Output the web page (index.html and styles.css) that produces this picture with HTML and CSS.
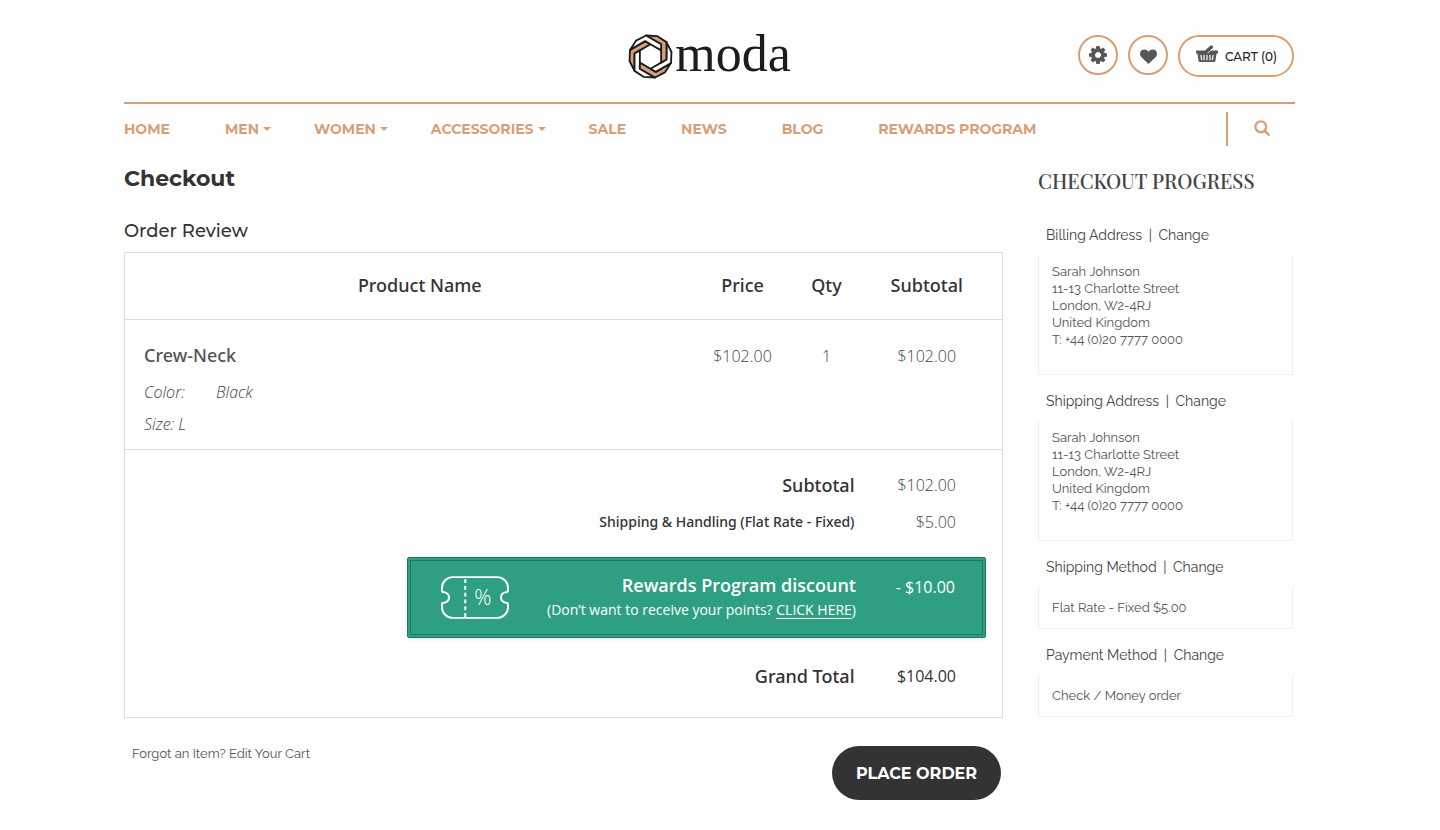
FILE: index.html
```html
<!DOCTYPE html>
<html lang="en">
<head>
<meta charset="utf-8">
<title>Checkout - moda</title>
<meta name="viewport" content="width=device-width, initial-scale=1">
<link rel="stylesheet" href="styles.css">
</head>
<body>
<div class="page">
  <header class="header">
    <a class="logo" href="#">
      <svg class="logo-mark" viewBox="0 0 44 44" aria-hidden="true">
        <defs><path id="blade" d="M22 10 27.2 7 42 15.5 42.5 26.4 37.6 36.1 37.6 19 32.4 16Z"/></defs>
        <g stroke="#1d1b1b" stroke-width="1.8" stroke-linejoin="round" transform="matrix(-1 0 0 1 44 0)">
          <use href="#blade" fill="#d6a077"/>
          <use href="#blade" fill="#fff" transform="rotate(60 22 22)"/>
          <use href="#blade" fill="#d6a077" transform="rotate(120 22 22)"/>
          <use href="#blade" fill="#fff" transform="rotate(180 22 22)"/>
          <use href="#blade" fill="#d6a077" transform="rotate(240 22 22)"/>
          <use href="#blade" fill="#fff" transform="rotate(300 22 22)"/>
        </g>
      </svg>
      <span class="logo-name">moda</span>
    </a>
    <div class="tools">
      <button class="round" type="button" aria-label="Settings">
        <svg width="18" height="18" viewBox="0 128 1536 1536" aria-hidden="true"><path fill="#555759" d="M1024 896q0-106-75-181t-181-75-181 75-75 181 75 181 181 75 181-75 75-181zm512-109v222q0 12-8 23t-20 13l-185 28q-19 54-39 91 35 50 107 138 10 12 10 25t-9 23q-27 37-99 108t-94 71q-12 0-26-9l-138-108q-44 23-91 38-16 136-29 186-7 28-36 28h-222q-14 0-24.5-8.5t-11.5-21.5l-28-184q-49-16-90-37l-141 107q-10 9-25 9-14 0-25-11-126-114-165-168-7-10-7-23 0-12 8-23 15-21 51-66.5t54-70.5q-27-50-41-99l-183-27q-13-2-21-12.5t-8-23.5v-222q0-12 8-23t19-13l186-28q14-46 39-92-40-57-107-138-10-12-10-24 0-10 9-23 26-36 98.500-107.500t94.500-71.500q13 0 26 10l138 107q44-23 91-38 16-136 29-186 7-28 36-28h222q14 0 24.500 8.500t11.500 21.500l28 184q49 16 90 37l142-107q9-9 24-9 13 0 25 10 129 119 165 170 7 8 7 22 0 12-8 23-15 21-51 66.500t-54 70.500q26 50 41 98l183 28q13 2 21 12.500t8 23.500z"/></svg>
      </button>
      <button class="round" type="button" aria-label="Wishlist">
        <svg class="heart" width="17" height="15" viewBox="0 0 18 16" aria-hidden="true"><path fill="#555759" d="M9 16 1.500 8.700C0 7.200 0 5.800 0 5 0 2 2 .500 4.700.500 6.500.500 8.200 1.800 9 3 9.800 1.800 11.500.500 13.300.500 16 .500 18 2 18 5c0 .800 0 2.200-1.500 3.700Z"/></svg>
      </button>
      <button class="cart" type="button">
        <svg width="24" height="18" viewBox="0 0 24 18" aria-hidden="true">
          <path fill="#555759" d="M1.500 5.500H10L15.300.800Q16.600 0 17.800.800 18.600 1.800 17.800 2.900L15.500 5.500H22.500L23 6V8.500H21.600L20.400 16Q20.200 17 19.200 17H4.800Q3.800 17 3.600 16L2.400 8.500H1V6Z"/>
          <path d="M12.600 8.200 17.600 3.600" stroke="#fff" stroke-width=".8"/>
          <path d="M5.900 10 6.700 15.200M9 10V15.200M12 10V15.200M15 10V15.200M18.100 10 17.300 15.200" stroke="#fff" stroke-width="1.200"/>
        </svg>
        <span>CART (0)</span>
      </button>
    </div>
  </header>

  <nav class="nav" aria-label="Main">
    <ul class="menu">
      <li><a href="#">HOME</a></li>
      <li><a class="drop" href="#">MEN</a></li>
      <li><a class="drop" href="#">WOMEN</a></li>
      <li><a class="drop" href="#">ACCESSORIES</a></li>
      <li><a href="#">SALE</a></li>
      <li><a href="#">NEWS</a></li>
      <li><a href="#">BLOG</a></li>
      <li><a href="#">REWARDS PROGRAM</a></li>
    </ul>
    <button class="search" type="button" aria-label="Search">
      <svg width="16" height="16" viewBox="0 0 16 16" fill="none" stroke="#d6a077" stroke-width="2.400" aria-hidden="true"><circle cx="6.800" cy="6.800" r="5.400"/><path d="m10.600 10.600 4 4" stroke-linecap="round" stroke-width="2.600"/></svg>
    </button>
  </nav>

  <div class="columns">
    <main class="main">
      <h1>Checkout</h1>
      <h2 class="review">Order Review</h2>
      <table class="order">
        <colgroup><col><col class="col-price"><col class="col-qty"><col class="col-sub"></colgroup>
        <thead>
          <tr><th class="name">Product Name</th><th>Price</th><th>Qty</th><th class="sub">Subtotal</th></tr>
        </thead>
        <tbody>
          <tr class="item">
            <td class="name">
              <div class="product">Crew-Neck</div>
              <div class="option"><span class="option-key">Color:</span>Black</div>
              <div class="option">Size: L</div>
            </td>
            <td>$102.00</td><td>1</td><td class="sub">$102.00</td>
          </tr>
        </tbody>
        <tfoot>
          <tr class="total-first"><th colspan="3" class="label">Subtotal</th><td class="amount">$102.00</td></tr>
          <tr class="shipping"><th colspan="3" class="label">Shipping &amp; Handling (Flat Rate - Fixed)</th><td class="amount">$5.00</td></tr>
          <tr><td colspan="4" class="reward-cell">
            <div class="reward">
              <svg class="ticket" width="68" height="45" viewBox="0 0 70 46" fill="none" stroke="#fff" stroke-width="2" aria-hidden="true">
                <path d="M12 2H58C64 2 69 7 69 13V16C69 17 68 17.500 67 17.500 60 19 60 27 67 28.500 68 28.500 69 29 69 30V33C69 39 64 44 58 44H12C6 44 1 39 1 33V30C1 29 2 28.500 3 28.500 10 27 10 19 3 17.500 2 17.500 1 17 1 16V13C1 7 6 2 12 2Z"/>
                <path d="M25 4V43" stroke-dasharray="4 3"/>
                <text class="percent" x="43" y="31" text-anchor="middle">%</text>
              </svg>
              <div class="reward-text">
                <div class="reward-title">Rewards Program discount</div>
                <div class="reward-note">(Don’t want to receive your points? <a href="#">CLICK HERE</a>)</div>
              </div>
              <div class="reward-amount">- $10.00</div>
            </div>
          </td></tr>
          <tr class="grand"><th colspan="3" class="label">Grand Total</th><td class="amount">$104.00</td></tr>
        </tfoot>
      </table>
      <div class="actions">
        <p class="forgot">Forgot an Item? <a href="#">Edit Your Cart</a></p>
        <button class="place" type="button">PLACE ORDER</button>
      </div>
    </main>

    <aside class="progress">
      <h2>CHECKOUT PROGRESS</h2>
      <section>
        <h3>Billing Address <i>|</i> <a href="#">Change</a></h3>
        <address class="box">Sarah Johnson<br>11-13 Charlotte Street<br>London, W2-4RJ<br>United Kingdom<br>T: +44 (0)20 7777 0000</address>
      </section>
      <section>
        <h3>Shipping Address <i>|</i> <a href="#">Change</a></h3>
        <address class="box">Sarah Johnson<br>11-13 Charlotte Street<br>London, W2-4RJ<br>United Kingdom<br>T: +44 (0)20 7777 0000</address>
      </section>
      <section>
        <h3>Shipping Method <i>|</i> <a href="#">Change</a></h3>
        <p class="box method">Flat Rate - Fixed $5.00</p>
      </section>
      <section>
        <h3>Payment Method <i>|</i> <a href="#">Change</a></h3>
        <p class="box method">Check / Money order</p>
      </section>
    </aside>
  </div>
</div>
</body>
</html>
```
FILE: styles.css
```css
* { box-sizing: border-box; }
body {
  margin: 0;
  padding: 0 21px 0 0;
  background: #fefefe;
  color: #333;
  font-family: Montserrat, Inter, sans-serif;
}
a { color: inherit; text-decoration: none; }
button { font-family: inherit; padding: 0; cursor: pointer; }
.page { max-width: 1171px; margin: 0 auto; }

.header {
  display: grid;
  grid-template-columns: 1fr auto 1fr;
  padding: 30px 0 22px;
  border-bottom: 2px solid #d6a077;
}
.logo { grid-column: 2; display: flex; align-items: center; gap: 2px; color: #1d1b1b; }
.logo-mark { width: 45px; height: 45px; margin-top: 2px; }
.logo-name { padding-bottom: 2px; font: 52px/48px "Liberation Serif", serif; }
.tools { display: flex; justify-content: flex-end; align-items: flex-start; gap: 10px; padding: 5px 1px 0 0; }
.round, .cart {
  display: flex;
  align-items: center;
  justify-content: center;
  border: 2px solid #d6a077;
  background: #fff;
}
.round { width: 40px; height: 40px; border-radius: 50%; }
.heart { margin-top: 3px; }
.cart { width: 116px; height: 42px; border-radius: 21px; gap: 6px; font-size: 12px; font-weight: 500; color: #222; }
.cart svg { margin-bottom: 4px; }

.nav { display: flex; justify-content: space-between; color: #d6a077; padding-top: 8px; }
.menu {
  display: flex;
  gap: 55px;
  list-style: none;
  margin: 0;
  padding: 0;
  font-size: 14px;
  font-weight: 700;
  line-height: 34px;
}
.drop { display: flex; align-items: center; gap: 4px; margin-right: -12px; }
.drop::after { content: ""; border: 4px solid transparent; border-top-color: #d6a077; border-bottom: 0; }
.search {
  width: 69px;
  height: 34px;
  background: none;
  border: 0;
  border-left: 2px solid #d6a077;
}

.columns { display: flex; gap: 35px; }
.main { flex: 1; }
h1 { margin: 18px 0 0; font-size: 22px; font-weight: 700; line-height: 30px; color: #333; }
.review { margin: 25px 0 9px; font-size: 18px; font-weight: 500; line-height: 24px; }

.order {
  width: 100%;
  table-layout: fixed;
  border-collapse: collapse;
  border: 1px solid #ddd;
  font-family: "Open Sans", sans-serif;
  font-size: 16px;
  text-align: center;
}
.col-price { width: 94px; }
.col-qty { width: 74px; }
.col-sub { width: 139px; }
.order th, .order td { padding: 0; }
.order th { font-family: "Noto Sans", sans-serif; font-size: 18px; font-weight: 500; color: #333; }
.order thead th { height: 67px; padding-bottom: 2px; }
.order .name { padding-left: 19px; }
.order .sub { padding-right: 12px; }
.item { border-top: 1px solid #ddd; border-bottom: 1px solid #ddd; }
.item td { height: 130px; padding-top: 23px; vertical-align: top; font-weight: 300; line-height: 26px; color: #444; }
.item .name { text-align: left; }
.product { font-family: "Noto Sans", sans-serif; font-size: 18px; font-weight: 500; line-height: 24px; color: #555; padding-bottom: 9px; }
.option { font-style: italic; line-height: 32px; }
.option-key { display: inline-block; width: 72px; }
.order .label { text-align: right; padding-right: 9px; }
.order .amount { text-align: right; padding-right: 46px; font-weight: 300; color: #444; }
.total-first > * { height: 54px; vertical-align: bottom; line-height: 38px; }
.shipping > * { height: 36px; }
.order .shipping .label { font-size: 14px; }
.order .reward-cell { padding: 17px 16px 0 0; }
.reward {
  display: flex;
  margin-left: 282px;
  padding: 13px 27px 13px 30px;
  border: 4px double #1c7a5e;
  border-radius: 2px;
  background: #2f9f82;
  box-shadow: 0 2px 3px #0001;
  color: #fff;
}
.ticket { margin: 1px 0 0; }
.percent { fill: #fff; stroke: none; font: 300 22px "Open Sans", sans-serif; }
.reward-text { flex: 1; text-align: right; }
.reward-title { font-size: 18px; font-weight: 600; line-height: 22px; padding-bottom: 2px; }
.reward-note { font-size: 14px; line-height: 23px; }
.reward-note a { text-decoration: underline; text-underline-offset: 3px; }
.reward-amount { width: 99px; text-align: right; font-size: 16px; line-height: 26px; }
.order .grand > * { height: 80px; padding-bottom: 2px; }
.order .grand .amount { font-weight: 500; color: #333; }

.actions { display: flex; justify-content: space-between; padding: 28px 2px 28px 8px; }
.forgot { margin: 0; font: 13px/16px Raleway, "Open Sans", sans-serif; color: #555; }
.place {
  width: 169px;
  height: 54px;
  border: 0;
  border-radius: 27px;
  background: #333;
  color: #fff;
  font-size: 16px;
  font-weight: 700;
}

.progress { width: 257px; padding-right: 2px; font-family: Raleway, Lato, sans-serif; }
.progress h2 { margin: 22px 0 15px; font: 500 20px/26px "Playfair Display", "Liberation Serif", serif; color: #444; white-space: nowrap; }
.progress h3 { margin: 0; padding: 6px 8px 0; font-size: 14px; font-weight: 400; line-height: 40px; color: #444; }
.progress h3 i { font-style: normal; margin: 0 3px; }
.box {
  margin: 0;
  padding: 8px 13px 26px;
  border: 1px solid #eee;
  border-top: 0;
  font-size: 13px;
  font-style: normal;
  line-height: 17px;
  color: #555;
}
.method { padding: 12px 13px; }
```
